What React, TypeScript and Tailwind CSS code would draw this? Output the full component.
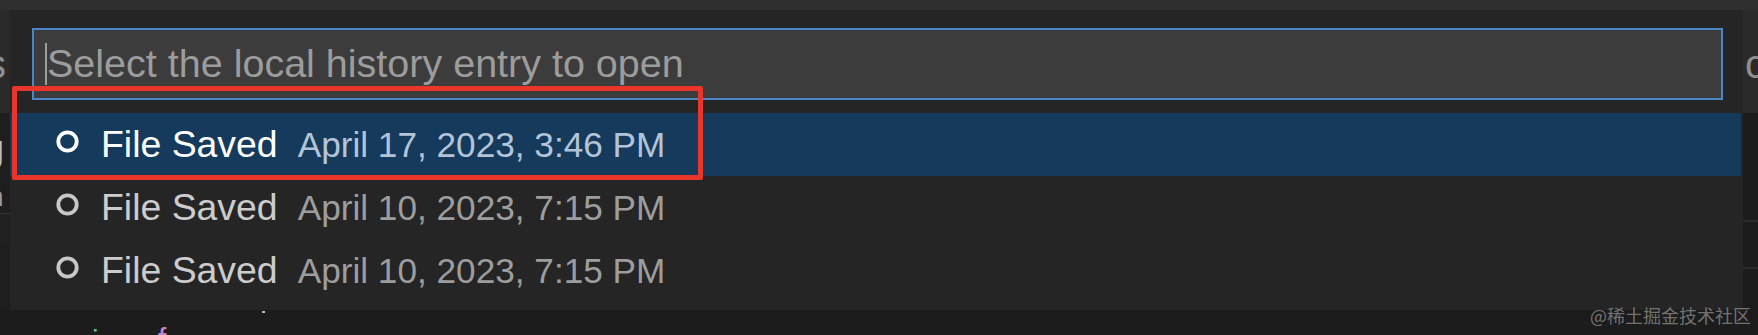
import React from "react";

const rows = [
  { label: "File Saved", date: "April 17, 2023, 3:46 PM", selected: true },
  { label: "File Saved", date: "April 10, 2023, 7:15 PM", selected: false },
  { label: "File Saved", date: "April 10, 2023, 7:15 PM", selected: false },
];

function CircleIcon({ color }: { color: string }) {
  return (
    <svg width="23" height="23" viewBox="0 0 23 23" className="shrink-0 mb-[6px]">
      <circle cx="11.5" cy="11.5" r="9.2" fill="none" stroke={color} strokeWidth="3.8" />
    </svg>
  );
}

export default function App() {
  return (
    <div
      className="relative w-[1758px] h-[335px] overflow-hidden bg-[#1e1e1e] flex flex-col"
      style={{ fontFamily: '"Liberation Sans", Arial, sans-serif' }}
    >
      {/* top strip */}
      <div className="h-[10px] shrink-0 bg-[#2f2f2f]" />

      <div className="flex h-[300px] shrink-0">
        {/* left gutter */}
        <div className="w-[10px] shrink-0 flex flex-col overflow-hidden">
          <div className="h-[103px] bg-[#2a2a2a] relative overflow-hidden">
            <span className="absolute left-[-14px] top-[34px] text-[40px] leading-none text-[#8f8f8f]">s</span>
          </div>
          <div className="flex-1 bg-[#1e1e1e] relative overflow-hidden">
            <span className="absolute left-[-16px] top-[18px] text-[36px] leading-none text-[#bdbdbd]">g</span>
            <span className="absolute left-[-12px] top-[70px] text-[28px] leading-none text-[#9a9a9a]">n</span>
            <div className="absolute left-0 right-0 top-[100px] h-[1px] bg-[#333333]" />
            <div className="absolute left-0 right-0 top-[101px] h-[28px] bg-[#232023]" />
            <span className="absolute left-[-14px] top-[102px] text-[24px] leading-none text-[#c586c0]">x</span>
          </div>
        </div>

        {/* quick pick panel */}
        <div className="w-[1733px] shrink-0 bg-[#252526] flex flex-col pt-[18px] pb-[8px]">
          <div className="mr-[20px] ml-[22px] h-[72px] border-2 border-[#4a86c8] bg-[#3c3c3c] flex items-center pl-[11px]">
            <div className="w-[2px] h-[42px] bg-[#9e9e9e]" />
            <span className="text-[39.5px] text-[#9c9c9c] leading-none">Select the local history entry to open</span>
          </div>
          <div className="mt-[13px] flex flex-col mr-[2px]">
            {rows.map((r, i) => (
              <div
                key={i}
                className={`h-[63px] flex items-center pl-[46px] ${r.selected ? "bg-[#153a5c]" : ""}`}
              >
                <CircleIcon color={r.selected ? "#ffffff" : "#c8c8c8"} />
                <span
                  className={`ml-[22px] text-[37.4px] leading-none ${r.selected ? "text-white" : "text-[#cccccc]"}`}
                >
                  {r.label}
                </span>
                <span
                  className={`ml-[20px] text-[35.2px] leading-none ${r.selected ? "text-[#b3c4d8]" : "text-[#9d9d9d]"}`}
                >
                  {r.date}
                </span>
              </div>
            ))}
          </div>
        </div>

        {/* right gutter */}
        <div className="flex-1 flex flex-col overflow-hidden">
          <div className="h-[103px] bg-[#2a2a2a] relative overflow-hidden">
            <span className="absolute left-[2px] top-[34px] text-[40px] leading-none text-[#8f8f8f]">c</span>
          </div>
          <div className="flex-1 bg-[#1c1c1c] relative">
            <div className="absolute left-0 right-0 top-[107px] h-[2px] bg-[#2b2b2b]" />
            <div className="absolute left-0 right-0 top-[154px] h-[2px] bg-[#2b2b2b]" />
          </div>
        </div>
      </div>

      {/* bottom editor strip */}
      <div className="flex-1 bg-[#1c1c1c] relative overflow-hidden">
        <div className="absolute left-[262px] top-[1px] w-[3px] h-[2px] bg-[#bbbbbb]" />
        <span className="absolute left-[92px] top-[16px] text-[30px] leading-none text-[#4ec9b0]">i</span>
        <span className="absolute left-[158px] top-[14px] text-[30px] leading-none text-[#c586c0]">f</span>
      </div>

      {/* red annotation box */}
      <div className="absolute left-[12px] top-[86px] w-[691px] h-[94px] border-[5px] border-[#e8362a] rounded-[2px]" />

      {/* watermark */}
      <div
        className="absolute left-[1590px] top-[306px] text-[18px] leading-none text-[#8a8a8a]/80"
        style={{ fontFamily: '"Noto Sans CJK SC", sans-serif' }}
      >
        @稀土掘金技术社区
      </div>
    </div>
  );
}
